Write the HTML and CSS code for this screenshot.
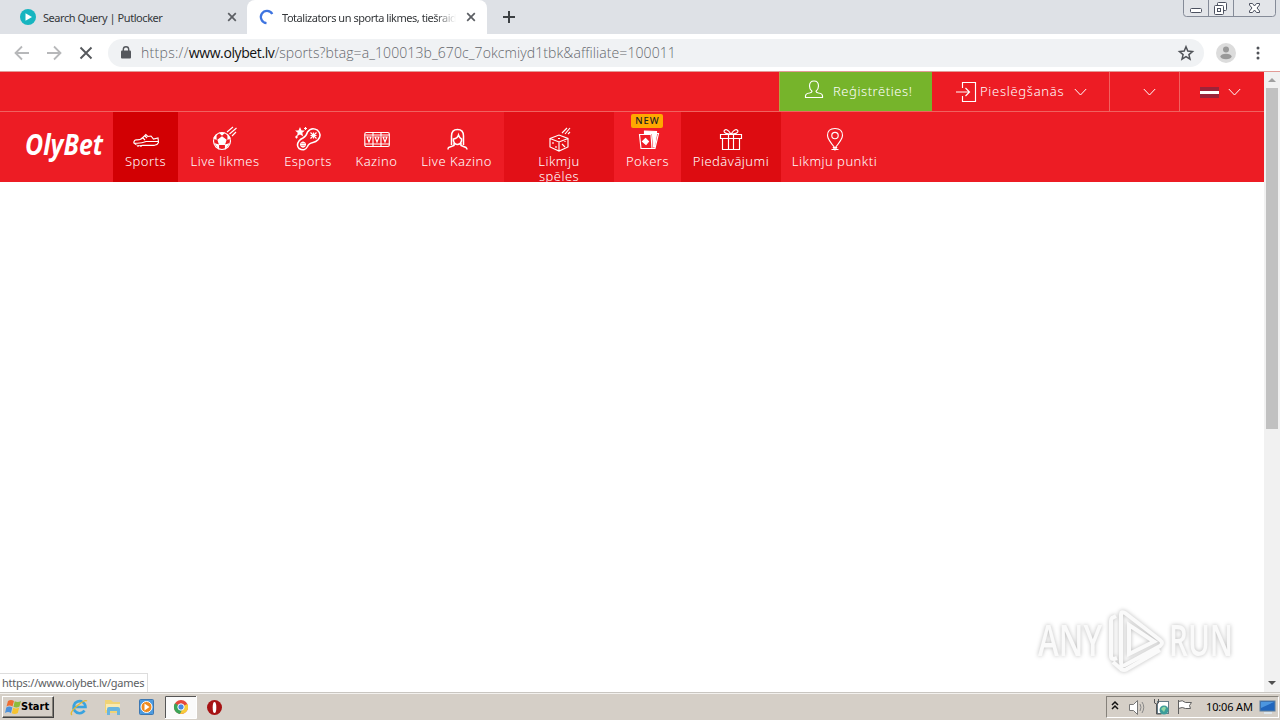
FILE: index.html
```html
<!DOCTYPE html>
<html lang="lv">
<head>
<meta charset="utf-8">
<title>Totalizators un sporta likmes</title>
<link rel="stylesheet" href="styles.css">
</head>
<body>
<div class="screen">
  <header class="tabstrip">
    <div class="tab tab-idle">
      <svg class="favicon" width="16" height="16" viewBox="0 0 16 16"><circle cx="8" cy="8" r="8" fill="#17b5c0"/><path d="M5.500 4.200 12 8l-6.500 3.800z" fill="#fff"/></svg>
      <span class="tab-title t1">Search Query | Putlocker</span>
      <svg class="tab-close" width="10" height="10" viewBox="0 0 10 10"><path d="M1.200 1.200l7.600 7.600M8.800 1.200l-7.600 7.600" stroke="#5b5e63" stroke-width="1.700"/></svg>
    </div>
    <div class="tab tab-active">
      <svg class="favicon" width="16" height="16" viewBox="0 0 16 16"><path d="M14.300 5A6.100 6.100 0 1 0 8.500 14.100" fill="none" stroke="#3e74e0" stroke-width="2.300"/></svg>
      <span class="tab-title t2">Totalizators un sporta likmes, tiešraides</span>
      <svg class="tab-close" width="10" height="10" viewBox="0 0 10 10"><path d="M1.200 1.200l7.600 7.600M8.800 1.200l-7.600 7.600" stroke="#5b5e63" stroke-width="1.700"/></svg>
    </div>
    <svg class="newtab" width="12" height="12" viewBox="0 0 12 12"><path d="M6 0v12M0 6h12" stroke="#3c4043" stroke-width="2"/></svg>
    <svg class="winbuttons" width="94" height="18" viewBox="0 0 94 18"><path d="M.5 0v13.500q0 3 3 3h86q3 0 3-3V0M25.500 0v16M50.500 0v16" fill="#e3e5e9" stroke="#858b98"/><rect x="7.500" y="8.500" width="11" height="4" rx="1" fill="#fff" stroke="#4c5160"/><rect x="34.500" y="2.500" width="9" height="8" rx="1" fill="#fff" stroke="#4c5160"/><rect x="31.500" y="5.500" width="9" height="9" rx="1" fill="#fff" stroke="#4c5160"/><rect x="34.500" y="8.500" width="3" height="3" fill="#fff" stroke="#4c5160"/><path d="M66.500 3.500h3l2 2.500 2-2.500h3v1.500l-2.500 3 2.500 3v1.500h-3l-2-2.500-2 2.500h-3v-1.500l2.500-3-2.500-3z" fill="#fff" stroke="#4c5160"/></svg>
  </header>
  <div class="toolbar">
    <svg class="navbtns" width="108" height="36" viewBox="0 0 108 36"><path d="M29 18H16M22 11.500 15.500 18l6.500 6.500M47 18h13M54 11.500l6.500 6.500-6.500 6.500" fill="none" stroke="#b7b8ba" stroke-width="1.800"/><path d="M80.500 12.500l11 11M91.500 12.500l-11 11" stroke="#55585c" stroke-width="1.900"/></svg>
    <div class="omnibox">
      <svg class="lock" width="10" height="13" viewBox="0 0 10 13"><rect x="0" y="4.500" width="10" height="8" rx="1" fill="#54575c"/><path d="M2.300 5V3.400a2.700 2.700 0 0 1 5.400 0V5" fill="none" stroke="#54575c" stroke-width="1.400"/></svg>
      <span class="url"><span class="scheme">https://</span><span class="host">www.olybet.lv</span><span class="path">/sports?btag=a_100013b_670c_7okcmiyd1tbk&amp;affiliate=100011</span></span>
      <svg class="star" width="16" height="16" viewBox="0 0 16 16"><path d="M8 1.700l1.800 4.400 4.700.4-3.600 3.100 1.100 4.600L8 11.700l-4 2.500 1.100-4.600L1.500 6.500l4.700-.4z" fill="none" stroke="#505358" stroke-width="1.500"/></svg>
    </div>
    <svg class="avatar" width="20" height="20" viewBox="0 0 20 20"><circle cx="10" cy="10" r="10" fill="#dcdcdc"/><circle cx="10" cy="6.500" r="3" fill="#999"/><ellipse cx="10" cy="13.500" rx="5.600" ry="2.800" fill="#999"/></svg>
    <svg class="dots" width="4" height="14" viewBox="0 0 4 14"><g fill="#505358"><circle cx="2" cy="2" r="1.500"/><circle cx="2" cy="7" r="1.500"/><circle cx="2" cy="12" r="1.500"/></g></svg>
  </div>

  <main class="viewport">
    <div class="site">
      <div class="topbar">
        <a class="register"><svg width="20" height="20" viewBox="0 0 20 20"><path d="M1.500 17.500h17v-1.500q0-2.500-4-3-2.500-.4-2.500-1.700 2.500-2 2.500-5.300Q14.500 1 10 1T5.500 6q0 3.300 2.500 5.300 0 1.300-2.500 1.700-4 .5-4 3z"/></svg><span class="reg-label">Reģistrēties!</span></a>
        <a class="login"><svg width="22" height="22" viewBox="0 0 22 22"><path d="M6.500 7V1.500h13v19h-13V15M0 11h13M9.500 7l4 4-4 4"/></svg><span class="login-label">Pieslēgšanās</span><svg class="chev" width="13" height="8" viewBox="0 0 13 8"><path d="M.8 1l5.700 6 5.700-6"/></svg></a>
        <a class="blank"><svg class="chev" width="13" height="8" viewBox="0 0 13 8"><path d="M.8 1l5.700 6 5.700-6"/></svg></a>
        <a class="lang"><span class="flag"></span><svg class="chev" width="13" height="8" viewBox="0 0 13 8"><path d="M.8 1l5.700 6 5.700-6"/></svg></a>
      </div>
      <nav class="mainnav">
        <a class="logo"><svg width="84" height="36" viewBox="0 0 84 36"><text x="3" y="24" textLength="78" lengthAdjust="spacingAndGlyphs">OlyBet</text></svg></a>
        <a class="item sports"><svg viewBox="0 0 26 26"><path d="M.8 17q0-3 2.700-3.200 4.500.2 7-3l2.300-2.300 2 2 3.200-.5 2.500 3 4.500-1 .5 4.500q-1 2.500-4 2.800H10q-6 1.500-9.200-2.300zM1 17q7 .8 12-1.500h12M12 10l2 2m-4 0 2 2M5 19v2m3-2v2m9-2v1m3-1v1"/></svg><span>Sports</span></a>
        <a class="item live"><svg viewBox="0 0 26 26"><circle cx="10" cy="15" r="8.500"/><path d="M10 11l4 3-1.500 4.500h-5L6 14zM8 7h4l-2 2zM2 12l2-2v3zM16 10l2 2-2 1zM3.500 18l3 1v3zM16.500 18l-3 1v3z" fill="#fff"/><path d="M15 6l6-5M17.500 8l7-6M20 10l4-4"/></svg><span>Live likmes</span></a>
        <a class="item esports"><svg viewBox="0 0 26 26"><path class="bold" d="M4 22.500q-3-3.500 0-7.500 1.500-2 4-3 3.500-2 4.500-6 4-5.500 10-1.800 4.800 4.300.5 9.600-2 2.200-5 2.700-4.500 1-5.500 4-3 5.500-8.500 2z"/><path d="M15.500 6.500l6 6m0-6-6 6M15.500 9.500h6M18.500 6.500v6"/><circle cx="8" cy="18.500" r="2.300"/><path d="M8 15.500v6m-3-3h6"/><path d="M5 2.500l1 2.200 2.500.3-1.800 1.500.5 2.500L5 7.700 2.800 9l.5-2.500L1.500 5 4 4.700z" fill="#fff"/><path d="M10.500 1v3M9 2.500h3M1.500 9.500v3M0 11h3"/></svg><span>Esports</span></a>
        <a class="item kazino"><svg viewBox="0 0 26 26"><rect x=".8" y="6.500" width="24.500" height="14" rx="1.500"/><path d="M9 6.500v14M17 6.500v14M1 9h24M1 18h24M3 11h4L5 16zM11 11h4l-2 5zM19 11h4l-2 5z"/></svg><span>Kazino</span></a>
        <a class="item livekaz"><svg viewBox="0 0 26 26"><path class="bold" d="M7.500 19V10q0-6.500 6-6.500t6 6.500v9M9.500 13q4-.5 5-4 1 3 3 4v2q-1 3.500-4 3.500t-4-3.500zM10 17v2.500l-5.500 2q-.5 1-.5 2M17 17v2.500l5 2q1 1 1 2"/></svg><span>Live Kazino</span></a>
        <a class="item games"><svg viewBox="0 0 26 26"><path d="M4 12.500l9-3.500 9 3.500v8.500l-9 4-9-4zM4 12.500l9 3.500 9-3.500M13 16v9M12 12.500h2M7 16v2M10 20v2M16 18l3 3M19 15v1M16 7l5-5M19 8l5-6M22 8l2-2"/></svg><span>Likmju<br>spēles</span></a>
        <a class="item pokers"><b class="badge">NEW</b><svg viewBox="0 0 26 26"><path d="M4.500 8.500h11.500l1 14H6z"/><path d="M10.500 12.500l3 3-2.500 3-3.500-3zM9.500 5l12 .5v2h-12zM17.500 8h4l-2 13h-1z" fill="#fff"/><path d="M21 7.500h2.500L20 22.500h-3"/></svg><span>Pokers</span></a>
        <a class="item offers"><svg viewBox="0 0 26 26"><path d="M2.500 8.500h21v4h-21zM4.500 12.500h17v11h-17zM10.500 8.500v15M15.500 8.500v15M13 8q-7 0-7-3 2-4 7 3 5-7 7-3 0 3-7 3"/></svg><span>Piedāvājumi</span></a>
        <a class="item points"><svg viewBox="0 0 26 26"><path d="M13 22Q5.500 13 5.500 9.500 5.500 2.500 13 2.500t7.500 7Q20.500 13 13 22M9.500 23.500h7M11 21l2 3 2-3"/><circle cx="13" cy="9.500" r="3.200"/></svg><span>Likmju punkti</span></a>
      </nav>
      <div class="content"></div>
    </div>
    <div class="scrollbar">
      <svg width="16" height="15" viewBox="0 0 16 15"><path d="M4 10h8L8 6z" fill="#a0a0a0"/></svg>
      <div class="thumb"></div>
      <svg width="16" height="17" viewBox="0 0 16 17"><path d="M4 6h8l-4 4z" fill="#505050"/></svg>
    </div>
    <div class="status"><span>https://www.olybet.lv/games</span></div>
    <svg class="watermark" width="210" height="74" viewBox="0 0 210 74">
      <g class="wm"><text x="8" y="51" textLength="64" lengthAdjust="spacingAndGlyphs">ANY</text><text x="139" y="51" textLength="64" lengthAdjust="spacingAndGlyphs">RUN</text>
      <path d="M86 11l-4 2q-1 1-1 3v35q0 3 3 3l3-1M91 9v48q0 5 4 3l35-19q4-3 0-6L95 8q-4-2-4 1zM99 20v29l25-12.500zM83 57l8 7q3 2 6 0l33-19"/></g>
    </svg>
  </main>

  <footer class="taskbar">
    <div class="start"><svg width="17" height="16" viewBox="0 0 17 16"><path d="M3 2q3-2 6 0L7.500 7.500q-3-2-6 0z" fill="#ee6d32"/><path d="M9.700 2.300q3 1.500 6.300-.300L14.500 7.500q-3 2-6 .3z" fill="#8dbb3c"/><path d="M1.300 8.500q3-2 6 0L6 14q-3-2-6 0z" fill="#4c91db"/><path d="M8.200 8.800q3 1.700 6-.300L12.800 14q-3 2-6 .300z" fill="#f6c32f"/></svg><span>Start</span></div>
    <svg class="quick" width="174" height="26" viewBox="0 0 174 26">
      <path d="M18.500 16.500a6 6 0 1 1 1-3.500H9" fill="none" stroke="#39a3df" stroke-width="2.600"/><path d="M6 21q-3-2 5-9t10-5" fill="none" stroke="#e6b92f" stroke-width="1.300"/>
      <path d="M39 6h6l2 2h7v11H39z" fill="#f0d376"/><path d="M40 10h14v6H40z" fill="#faeab0"/><path d="M41 21v-6q0-2 2-2h9q2 0 2 2v6h-3v-4h-7v4z" fill="#69b5df"/>
      <rect x="73.500" y="5.500" width="14" height="15" rx="1" fill="#4c9be0" stroke="#3c77b2"/><circle cx="80.500" cy="13" r="5.500" fill="#ee8b20" stroke="#fff"/><path d="M78.500 9.500l5 3.500-5 3.500z" fill="#fff"/>
      <rect x="99" y="2" width="31" height="22" fill="#fafafa"/><path d="M99.500 24V2.500H130" fill="none" stroke="#555"/><path d="M130.500 2v22.500H99" fill="none" stroke="#fff"/>
      <circle cx="115" cy="13" r="7" fill="#e5483c"/><path d="M115 13L109 9.300A7 7 0 0 0 114 20l3.500-6z" fill="#3ba457"/><path d="M115 13l6.300-3A7 7 0 0 1 114 20l3-6z" fill="#f6cc3a"/><circle cx="115" cy="13" r="3.200" fill="#4688e5" stroke="#fff"/>
      <circle cx="148.500" cy="13.500" r="7.500" fill="#a61213"/><ellipse cx="148.500" cy="13.500" rx="1.800" ry="5.500" fill="#fff"/>
    </svg>
    <div class="tray">
      <svg width="86" height="22" viewBox="0 0 86 22"><path d="M6 9l3-3 3 3M6 13l3-3 3 3" transform="translate(-1 0)" fill="none" stroke="#111" stroke-width="1.500"/><path d="M22.500 8.500h4l4-4v14l-4-4h-4z" fill="#fff" stroke="#777"/><path d="M33 8q2 3 0 7M35 6q3.500 5 0 11" fill="none" stroke="#888"/><rect x="50.500" y="5.500" width="11" height="12" fill="#fff" stroke="#647b87"/><path d="M47.500 3v4q2 2 4 0V3M49.500 8v10h5" fill="none" stroke="#555"/><circle cx="57" cy="14" r="4.500" fill="#3d9d9a"/><path d="M54 13q3-4 5-1l-2 4" fill="#91d6a3"/><path d="M71.500 4v14M71.500 5.500q4-2 7 1h6l-2 3 1 3h-5q-3-2-7 0" fill="#fff" stroke="#606060"/></svg>
      <span class="clock">10:06 AM</span>
      <svg width="17" height="16" viewBox="0 0 17 16"><rect x="1" y="2" width="15" height="10" fill="#2166bd" stroke="#5c7e9d"/><path d="M2 3h13L2 9z" fill="#4c96df"/><path d="M5 14h8" stroke="#dce5eb" stroke-width="2"/></svg>
    </div>
  </footer>
</div>
</body>
</html>
```

FILE: styles.css
```css
* { box-sizing: border-box; }
body { margin: 0; font-family: "Noto Sans", sans-serif; overflow: hidden; }
svg { display: block; flex: none; overflow: visible; }
span { white-space: nowrap; }
.screen { width: 1280px; height: 720px; display: flex; flex-direction: column; background: #fff; }

.tabstrip { height: 34px; flex: none; display: flex; background: #dee1e6; }
.tab { height: 34px; display: flex; align-items: center; font-size: 11px; color: #34373a; }
.tab-idle { width: 247px; padding-left: 20px; }
.tab-active { width: 240px; padding-left: 11px; background: #fff; border-radius: 8px 8px 0 0; }
.tab-title { width: 174px; margin-left: 8px; overflow: hidden; }
.t1 { letter-spacing: -0.44px; width: 183px; margin-left: 7px; }
.t2 { letter-spacing: -0.47px; -webkit-mask-image: linear-gradient(90deg, #000 88%, transparent); mask-image: linear-gradient(90deg, #000 88%, transparent); }
.tab-close { margin-left: 10px; }
.tab-idle .tab-close { margin-left: 1px; }
.newtab { margin: 11px 0 0 16px; }
.winbuttons { margin-left: auto; margin-right: 3px; }

.toolbar { height: 38px; flex: none; display: flex; align-items: center; background: #fff; border-bottom: 1px solid #e29b96; }
.omnibox { width: 1096px; height: 28px; border-radius: 14px; background: #f0f2f4; display: flex; align-items: center; padding: 0 10px 0 13px; }
.url { margin-left: 10px; margin-top: -1px; font-family: "Open Sans", sans-serif; font-weight: 300; font-size: 14px; color: #64676c; flex: 1; }
.scheme { letter-spacing: 0.3px; }
.host { color: #111; font-weight: 400; letter-spacing: -0.4px; }
.path { letter-spacing: 0.09px; }
.avatar { margin-left: 12px; }
.dots { margin-left: 20px; }

.viewport { flex: 1; min-height: 0; display: flex; position: relative; }
.site { width: 1264px; }
.topbar { height: 40px; background: #ed1c24; border-bottom: 1px solid #f0625f; display: flex; justify-content: flex-end; color: #fff; font-size: 13px; font-weight: 300; }
.topbar a { display: flex; align-items: center; height: 39px; }
.topbar svg, .item svg { fill: none; stroke: #fff; stroke-width: 1.15; }
.item svg .bold { stroke-width: 1.5; }
.topbar .chev { stroke-width: 1; }
.topbar span { position: relative; top: -1px; }
.register { width: 153px; background: #76b42b; padding-left: 24px; border-left: 1px solid #b2a642; }
.reg-label { margin-left: 9px; letter-spacing: 0.55px; }
.register svg { margin-top: -4px; }
.login { width: 177px; padding-left: 24px; }
.login-label { margin-left: 2px; width: 94px; letter-spacing: 0.7px; }
.blank { width: 70px; border-left: 1px solid #f2625f; padding-left: 33px; }
.lang { width: 85px; border-left: 1px solid #f2625f; padding-left: 20px; }
.topbar .flag { top: 1px; width: 19px; height: 11px; margin-right: 9px; background: linear-gradient(#9c2339 4px, #fff 4px 7px, #9c2339 7px); }
.mainnav { height: 70px; display: flex; background: #ed1c24; overflow: hidden; }
.logo { width: 113px; padding: 19px 0 0 22px; }
.logo text { font: italic 700 29px "Noto Sans", sans-serif; fill: #fff; }
.item { height: 70px; padding-top: 14px; display: flex; flex-direction: column; align-items: center; color: #fff; font-size: 13px; font-weight: 300; line-height: 15px; text-align: center; letter-spacing: 0.48px; position: relative; }
.item svg { width: 26px; height: 26px; margin-bottom: 2px; }
.sports { width: 65px; background: #d20003; }
.live { width: 94px; }
.esports { width: 72px; }
.kazino { width: 65px; }
.livekaz { width: 95px; }
.games { width: 110px; background: #e21017; }
.pokers { width: 67px; background: #f01d26; }
.offers { width: 100px; background: #dd0c11; }
.points { width: 107px; }
.badge { position: absolute; left: 17px; top: 2px; width: 32px; height: 14px; border-radius: 2px; background: #ffa800; color: #222; font-size: 9.5px; font-weight: 500; line-height: 14px; letter-spacing: 1px; padding-left: 1px; z-index: 1; }
.scrollbar { width: 16px; background: #f1f1f1; display: flex; flex-direction: column; }
.thumb { width: 12px; height: 341px; margin: 1px auto auto 2px; background: #c1c1c1; }
.status { position: absolute; left: 0; bottom: 0; width: 148px; height: 19px; border: 1px solid #ddd; border-width: 1px 1px 0 0; background: #fff; padding-left: 2px; font-size: 11px; line-height: 18px; color: #5c5e62; letter-spacing: -0.23px; }
.watermark { position: absolute; left: 1030px; top: 533px; }
.wm { filter: drop-shadow(0 0 2px #bbb); fill: #fafafa; }
.wm text { font: 600 43px "Open Sans", sans-serif; }
.wm path { fill: none; stroke: #fafafa; stroke-width: 4; }

.taskbar { height: 28px; flex: none; display: flex; align-items: center; background: #d5cfc7; border-top: 1px solid #c9c6c1; box-shadow: inset 0 1px #f3f1ee; }
.start { width: 52px; height: 22px; margin-left: 2px; display: flex; align-items: center; padding-left: 2px; border: 1px solid; border-color: #fff #404040 #404040 #fff; box-shadow: inset -1px -1px #858179; font: 700 11px "DejaVu Sans Condensed", sans-serif; color: #000; }
.start span { margin-left: -1px; }
.quick { margin-left: 12px; }
.tray { width: 173px; height: 22px; margin-left: auto; margin-right: 1px; display: flex; align-items: center; border: 1px solid; border-color: #85817a #fff #fff #85817a; }
.clock { margin-left: 13px; width: 53px; font-size: 11px; color: #000; letter-spacing: -0.15px; }
```
